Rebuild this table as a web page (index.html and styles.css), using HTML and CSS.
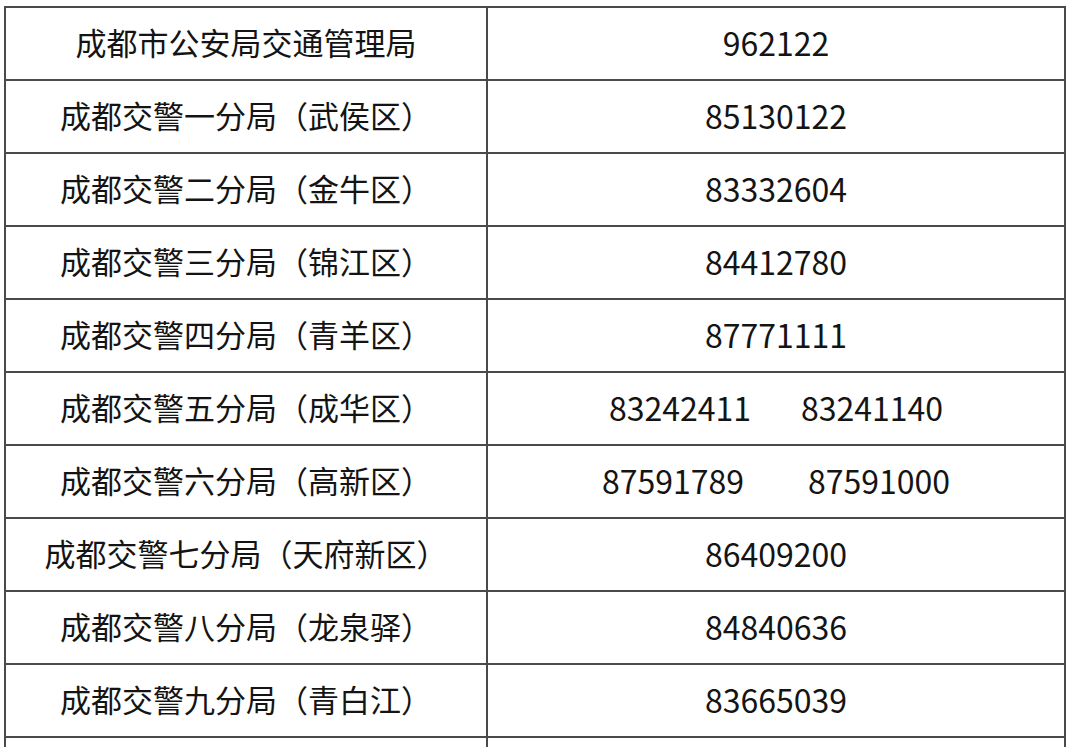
FILE: index.html
```html
<!DOCTYPE html>
<html lang="zh">
<head>
<meta charset="utf-8">
<link rel="stylesheet" href="styles.css">
</head>
<body>
<table class="phones">
<tr><td class="name">成都市公安局交通管理局</td><td class="num">962122</td></tr>
<tr><td class="name">成都交警一分局（武侯区）</td><td class="num">85130122</td></tr>
<tr><td class="name">成都交警二分局（金牛区）</td><td class="num">83332604</td></tr>
<tr><td class="name">成都交警三分局（锦江区）</td><td class="num">84412780</td></tr>
<tr><td class="name">成都交警四分局（青羊区）</td><td class="num">87771111</td></tr>
<tr><td class="name">成都交警五分局（成华区）</td><td class="num"><span>83242411</span><span class="second gap50">83241140</span></td></tr>
<tr><td class="name">成都交警六分局（高新区）</td><td class="num"><span>87591789</span><span class="second gap64">87591000</span></td></tr>
<tr><td class="name">成都交警七分局（天府新区）</td><td class="num">86409200</td></tr>
<tr><td class="name">成都交警八分局（龙泉驿）</td><td class="num">84840636</td></tr>
<tr><td class="name">成都交警九分局（青白江）</td><td class="num">83665039</td></tr>
<tr><td class="name">&nbsp;</td><td class="num">&nbsp;</td></tr>
</table>
</body>
</html>
```
FILE: styles.css
```css
html, body {
  margin: 0;
  padding: 0;
  background: #ffffff;
}
body {
  padding: 6px 0 0 4px;
  overflow: hidden;
  height: 747px;
  box-sizing: border-box;
}
.phones {
  border-collapse: collapse;
  width: 1062px;
  table-layout: fixed;
  font-family: "Noto Sans CJK SC", "Noto Sans", sans-serif;
  font-size: 31px;
  color: #141414;
}
.phones td {
  border: 2px solid #4a4a4a;
  height: 73px;
  padding: 0 0 4px 0;
  box-sizing: border-box;
  text-align: center;
  vertical-align: middle;
  line-height: 1;
}
.phones td.name {
  width: 482px;
}
.phones td.num {
  font-size: 32px;
}
.second.gap50 { margin-left: 50px; }
.second.gap64 { margin-left: 64px; }
```
